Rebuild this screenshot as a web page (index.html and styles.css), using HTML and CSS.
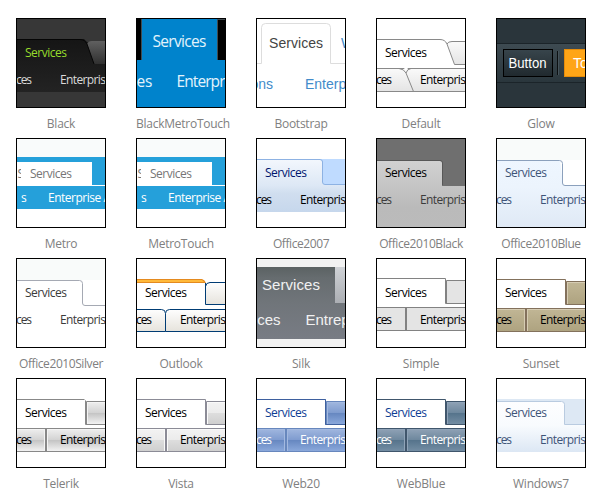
FILE: index.html
```
<!DOCTYPE html>
<html lang="en">
<head>
<meta charset="utf-8">
<title>Skins</title>
<link rel="stylesheet" href="styles.css">
</head>
<body>
<svg class="defs" width="0" height="0" aria-hidden="true">
  <defs>
    <linearGradient id="g-black" x2="0" y2="1"><stop offset="0" stop-color="#151515"/><stop offset="1" stop-color="#232323"/></linearGradient>
    <linearGradient id="g-black-tab" x2="0" y2="1"><stop offset="0" stop-color="#606060"/><stop offset="1" stop-color="#303030"/></linearGradient>
    <linearGradient id="g-default" x2="0" y2="1"><stop offset="0" stop-color="#fafafa"/><stop offset="1" stop-color="#e4e4e4"/></linearGradient>
    <linearGradient id="g-glow" x2="0" y2="1"><stop offset="0" stop-color="#3e4b52"/><stop offset="1" stop-color="#2a363c"/></linearGradient>
    <linearGradient id="g-glow-button" x2="0" y2="1"><stop offset="0" stop-color="#38454c"/><stop offset="1" stop-color="#20292e"/></linearGradient>
    <linearGradient id="g-o07" x2="0" y2="1"><stop offset="0" stop-color="#f3f7fd"/><stop offset=".5" stop-color="#dde8f5"/><stop offset=".65" stop-color="#d0deef"/><stop offset="1" stop-color="#c6d7ec"/></linearGradient>
    <linearGradient id="g-o10k" x2="0" y2="1"><stop offset="0" stop-color="#d2d2d2"/><stop offset=".7" stop-color="#bababa"/><stop offset="1" stop-color="#bbbbbb"/></linearGradient>
    <linearGradient id="g-o10b" x2="0" y2="1"><stop offset="0" stop-color="#eef6ff"/><stop offset=".4" stop-color="#ecf4fd"/><stop offset="1" stop-color="#dfe9f5"/></linearGradient>
    <linearGradient id="g-outlook" x2="0" y2="1"><stop offset="0" stop-color="#fefefe"/><stop offset="1" stop-color="#e6e3dc"/></linearGradient>
    <linearGradient id="g-silk" x2="0" y2="1"><stop offset="0" stop-color="#5b6263"/><stop offset=".15" stop-color="#666c6f"/><stop offset=".5" stop-color="#70757a"/><stop offset="1" stop-color="#787c84"/></linearGradient>
    <linearGradient id="g-silk-tab" x2="0" y2="1"><stop offset="0" stop-color="#cfd2d6"/><stop offset="1" stop-color="#abaeb3"/></linearGradient>
    <linearGradient id="g-sunset" x2="0" y2="1"><stop offset="0" stop-color="#c0b594"/><stop offset="1" stop-color="#aea380"/></linearGradient>
    <linearGradient id="g-telerik" x2="0" y2="1"><stop offset="0" stop-color="#ececec"/><stop offset=".48" stop-color="#d2d2d2"/><stop offset=".5" stop-color="#c5c5c5"/><stop offset="1" stop-color="#f2f2f2"/></linearGradient>
    <linearGradient id="g-vista" x2="0" y2="1"><stop offset="0" stop-color="#f2f2f2"/><stop offset=".48" stop-color="#ebebeb"/><stop offset=".5" stop-color="#dddddd"/><stop offset="1" stop-color="#cfcfcf"/></linearGradient>
    <linearGradient id="g-web20" x2="0" y2="1"><stop offset="0" stop-color="#9db4dd"/><stop offset=".48" stop-color="#7e9bcf"/><stop offset=".5" stop-color="#6788c1"/><stop offset="1" stop-color="#8aa8db"/></linearGradient>
    <linearGradient id="g-webblue" x2="0" y2="1"><stop offset="0" stop-color="#8c9fb3"/><stop offset=".48" stop-color="#6d879d"/><stop offset=".5" stop-color="#56748c"/><stop offset="1" stop-color="#738da3"/></linearGradient>
    <linearGradient id="g-win7" x2="0" y2="1"><stop offset="0" stop-color="#fefeff"/><stop offset=".5" stop-color="#f8fbfe"/><stop offset="1" stop-color="#dce7f4"/></linearGradient>

    <symbol id="square-tabs" viewBox="0 0 90 90">
      <rect class="sheen" x="70" y="23" width="20" height="24"/>
      <rect class="body" x="72" y="25" width="18" height="21"/>
      <path class="edge" d="M0 21.5H69.5V46.5H90M70.5 47V23.5H90"/>
      <rect class="sheen" x="0" y="51" width="90" height="22"/>
      <rect class="body" x="0" y="52" width="28" height="21"/>
      <rect class="body" x="32" y="52" width="58" height="21"/>
      <path class="edge" d="M0 50.5H90M0 73.5H90M29.5 50V74M30.5 50V74"/>
    </symbol>
    <symbol id="metro-tabs" viewBox="0 0 90 90">
      <rect fill="#f9fbfb" width="90" height="19"/>
      <rect fill="#25a0da" y="19" width="90" height="52"/>
      <path fill="#fff" d="M0 24H76V47H90V48H0Z"/>
    </symbol>
  </defs>
</svg>

<main class="gallery">
  <figure class="skin">
    <svg class="thumb" viewBox="0 0 90 90">
      <rect fill="#373737" width="90" height="90"/>
      <rect fill="url(#g-black)" y="21" width="90" height="53"/>
      <path fill="#373737" d="M67 20H90V24H71Z"/>
      <path fill="url(#g-black-tab)" d="M71 26Q72 23 76 23H90V46H78Z"/>
      <path fill="none" stroke="#050505" d="M0 21.5H64Q69 21.5 71 26L78 46"/>
      <text class="t lime" x="9" y="39" textLength="42">Services</text>
      <text class="t pale" x="0" y="66" textLength="16">ces</text>
      <text class="t pale" x="44" y="66" textLength="46">Enterpris</text>
      <rect class="frame" x=".5" y=".5" width="89" height="89"/>
    </svg>
    <figcaption>Black</figcaption>
  </figure>
  <figure class="skin">
    <svg class="thumb" viewBox="0 0 90 90">
      <rect fill="#0083cc" width="90" height="90"/>
      <path fill="#000" d="M0 0H5V42H0ZM82 0H90V42H82Z"/>
      <path fill="none" stroke="#414b50" d="M5.5 1V42M81.5 42V1.5H89"/>
      <text class="t big pale-blue" x="16.5" y="29" textLength="54">Services</text>
      <text class="t big pale-blue" x="16.5" y="69" text-anchor="end">ces</text>
      <text class="t big pale-blue" x="40.5" y="69" textLength="49">Enterpr</text>
      <rect class="frame" x=".5" y=".5" width="89" height="89"/>
    </svg>
    <figcaption class="wide">BlackMetroTouch</figcaption>
  </figure>
  <figure class="skin">
    <svg class="thumb" viewBox="0 0 90 90">
      <rect fill="#fff" width="90" height="90"/>
      <path fill="none" stroke="#ddd" d="M0 45.5H5.5V9.5Q5.5 5.5 9.5 5.5H70.5Q74.5 5.5 74.5 9.5V45.5H90"/>
      <text class="a a14 ink" x="13" y="30" textLength="54">Services</text>
      <text class="a a14 link" x="85" y="30">W</text>
      <text class="a a14 link" x="17" y="71" text-anchor="end">ons</text>
      <text class="a a14 link" x="49" y="71">Enterp</text>
      <rect class="frame" x=".5" y=".5" width="89" height="89"/>
    </svg>
    <figcaption>Bootstrap</figcaption>
  </figure>
  <figure class="skin">
    <svg class="thumb" viewBox="0 0 90 90">
      <rect fill="#fff" width="90" height="90"/>
      <g stroke="#898989">
        <path fill="url(#g-default)" d="M71 26Q72 23.500 76 23.500H92V46.500H78.500Z"/>
        <path fill="none" d="M0 21.500H64Q69 21.500 71 26"/>
        <rect fill="url(#g-default)" x="-2" y="50.500" width="94" height="23"/>
        <path fill="none" d="M23 50.500Q28 51 30 55L37.500 73.500M30 55Q31 51 35 50.500"/>
      </g>
      <path fill="#fff" d="M28 50L30 53L32 50Z"/>
      <text class="t" x="9" y="39" textLength="42">Services</text>
      <text class="t" x="0" y="66" textLength="16">ces</text>
      <text class="t" x="44" y="66" textLength="46">Enterpris</text>
      <rect class="frame" x=".5" y=".5" width="89" height="89"/>
    </svg>
    <figcaption>Default</figcaption>
  </figure>
  <figure class="skin">
    <svg class="thumb" viewBox="0 0 90 90">
      <rect fill="#2a353b" width="90" height="90"/>
      <rect fill="url(#g-glow)" x="-2" y="25.500" width="94" height="39" stroke="#1b2429"/>
      <rect fill="url(#g-glow-button)" x="7.500" y="31.500" width="49" height="27" stroke="#000"/>
      <path stroke="#0b0f11" d="M61.500 33V57"/>
      <path stroke="#46535a" d="M62.500 33V57"/>
      <rect fill="#ffa517" x="68.500" y="31.500" width="24" height="27" stroke="#e68c0a"/>
      <text class="a a14 white" x="12.500" y="50" textLength="38" lengthAdjust="spacingAndGlyphs">Button</text>
      <text class="a a14 white" x="77" y="50">To</text>
      <rect class="frame" x=".5" y=".5" width="89" height="89"/>
    </svg>
    <figcaption>Glow</figcaption>
  </figure>

  <figure class="skin">
    <svg class="thumb" viewBox="0 0 90 90">
      <rect fill="#fff" width="90" height="90"/>
      <use href="#metro-tabs" width="90" height="90"/>
      <svg width="5" height="90"><text class="t gray" x="1.500" y="40">S</text></svg>
      <text class="t gray" x="14" y="40" textLength="42">Services</text>
      <text class="t white" x="5" y="64">s</text>
      <text class="t white" x="32" y="64" textLength="63">Enterprise A</text>
      <rect class="frame" x=".5" y=".5" width="89" height="89"/>
    </svg>
    <figcaption>Metro</figcaption>
  </figure>
  <figure class="skin">
    <svg class="thumb" viewBox="0 0 90 90">
      <rect fill="#fff" width="90" height="90"/>
      <use href="#metro-tabs" width="90" height="90"/>
      <svg width="5" height="90"><text class="t gray" x="1.500" y="40">S</text></svg>
      <text class="t gray" x="14" y="40" textLength="42">Services</text>
      <text class="t white" x="5" y="64">s</text>
      <text class="t white" x="32" y="64" textLength="63">Enterprise A</text>
      <rect class="frame" x=".5" y=".5" width="89" height="89"/>
    </svg>
    <figcaption>MetroTouch</figcaption>
  </figure>
  <figure class="skin office">
    <svg class="thumb" viewBox="0 0 90 90">
      <rect fill="#fff" width="90" height="90"/>
      <rect fill="url(#g-o07)" y="21" width="90" height="53"/>
      <path fill="#bfdbff" stroke="#8db2e3" d="M66.500 20.500V44Q66.500 46.500 69 46.500H92V20.500Z"/>
      <path fill="#bfdbff" d="M64 21H90V24H67Z"/>
      <path fill="#fff" d="M60 20H90V21H60Z"/>
      <path fill="none" stroke="#8db2e3" d="M0 21.500H64Q66.500 21.500 66.500 24V44"/>
      <text class="t navy" x="9" y="39" textLength="42">Services</text>
      <text class="t" x="0" y="66" textLength="16">ces</text>
      <text class="t" x="44" y="66" textLength="46">Enterpris</text>
      <rect class="frame" x=".5" y=".5" width="89" height="89"/>
    </svg>
    <figcaption>Office2007</figcaption>
  </figure>
  <figure class="skin office">
    <svg class="thumb" viewBox="0 0 90 90">
      <rect fill="url(#g-o10k)" y="22" width="90" height="68"/>
      <path fill="#6f6f6f" d="M0 0H90V48H66V24Q66 23 64 23H0Z"/>
      <path fill="none" stroke="#575757" d="M0 22.500H64Q66.500 22.500 66.500 25V47"/>
      <text class="t" x="9" y="39" textLength="42">Services</text>
      <text class="t dark" x="0" y="66" textLength="16">ces</text>
      <text class="t dark" x="44" y="66" textLength="46">Enterpris</text>
      <rect class="frame" x=".5" y=".5" width="89" height="89"/>
    </svg>
    <figcaption>Office2010Black</figcaption>
  </figure>
  <figure class="skin office">
    <svg class="thumb" viewBox="0 0 90 90">
      <rect fill="#f9fbfa" width="90" height="90"/>
      <rect fill="url(#g-o10b)" y="22" width="90" height="68"/>
      <path fill="#fff" d="M64 22H90V47H67Z"/>
      <path fill="none" stroke="#8ba0bc" d="M0 22.500H63.500Q66.500 22.500 66.500 25.500V45Q66.500 47.500 69 47.500H90"/>
      <text class="t slate" x="9" y="39" textLength="42">Services</text>
      <text class="t slate" x="0" y="66" textLength="16">ces</text>
      <text class="t slate" x="44" y="66" textLength="46">Enterpris</text>
      <rect class="frame" x=".5" y=".5" width="89" height="89"/>
    </svg>
    <figcaption>Office2010Blue</figcaption>
  </figure>

  <figure class="skin office">
    <svg class="thumb" viewBox="0 0 90 90">
      <rect fill="#fff" width="90" height="90"/>
      <rect fill="#f9fbfa" width="90" height="22"/>
      <path fill="none" stroke="#a5a9b3" d="M0 22.500H63.500Q66.500 22.500 66.500 25.500V45Q66.500 47.500 69 47.500H90"/>
      <text class="t dark" x="9" y="39" textLength="42">Services</text>
      <text class="t dark" x="0" y="66" textLength="16">ces</text>
      <text class="t dark" x="44" y="66" textLength="46">Enterpris</text>
      <rect class="frame" x=".5" y=".5" width="89" height="89"/>
    </svg>
    <figcaption>Office2010Silver</figcaption>
  </figure>
  <figure class="skin">
    <svg class="thumb" viewBox="0 0 90 90">
      <rect fill="#fff" width="90" height="90"/>
      <g stroke="#003c74">
        <path fill="url(#g-outlook)" d="M69.500 46.500V28.500Q70 24.500 74 24.500H92V46.500Z"/>
        <path fill="url(#g-outlook)" d="M-2 51.500H25.500Q29.500 51.500 29.500 55.500V73.500H-2Z"/>
        <path fill="url(#g-outlook)" d="M29.500 73.500V55.500Q29.500 51.500 33.500 51.500H92V73.500Z"/>
        <path d="M69.500 25V30"/>
      </g>
      <path fill="#e48a1f" d="M0 21H66Q69 22 70 25H0Z"/>
      <path fill="#ffb93a" d="M0 22H66L68 24H0Z"/>
      <text class="t" x="9" y="39" textLength="42">Services</text>
      <text class="t" x="0" y="66" textLength="16">ces</text>
      <text class="t" x="44" y="66" textLength="46">Enterpris</text>
      <rect class="frame" x=".5" y=".5" width="89" height="89"/>
    </svg>
    <figcaption>Outlook</figcaption>
  </figure>
  <figure class="skin">
    <svg class="thumb" viewBox="0 0 90 90">
      <rect fill="#f2f2f2" width="90" height="90"/>
      <rect fill="url(#g-silk)" y="9" width="90" height="72"/>
      <rect fill="url(#g-silk-tab)" x="79" y="9" width="11" height="36"/>
      <text class="a a15 silk" x="6" y="32" textLength="58">Services</text>
      <text class="a a15 silk" x="24.500" y="67" text-anchor="end">ces</text>
      <text class="a a15 silk" x="49.500" y="67">Entrep</text>
      <rect class="frame" x=".5" y=".5" width="89" height="89"/>
    </svg>
    <figcaption>Silk</figcaption>
  </figure>
  <figure class="skin simple">
    <svg class="thumb" viewBox="0 0 90 90">
      <rect fill="#fff" width="90" height="90"/>
      <use href="#square-tabs" y="-1" width="90" height="90"/>
      <text class="t" x="9" y="39" textLength="42">Services</text>
      <text class="t" x="0" y="66" textLength="16">ces</text>
      <text class="t" x="44" y="66" textLength="46">Enterpris</text>
      <rect class="frame" x=".5" y=".5" width="89" height="89"/>
    </svg>
    <figcaption>Simple</figcaption>
  </figure>
  <figure class="skin sunset">
    <svg class="thumb" viewBox="0 0 90 90">
      <rect fill="#fff" width="90" height="90"/>
      <use href="#square-tabs" width="90" height="90"/>
      <text class="t" x="9" y="39" textLength="42">Services</text>
      <text class="t" x="0" y="66" textLength="16">ces</text>
      <text class="t" x="44" y="66" textLength="46">Enterpris</text>
      <rect class="frame" x=".5" y=".5" width="89" height="89"/>
    </svg>
    <figcaption>Sunset</figcaption>
  </figure>

  <figure class="skin telerik">
    <svg class="thumb" viewBox="0 0 90 90">
      <rect fill="#fff" width="90" height="90"/>
      <use href="#square-tabs" width="90" height="90"/>
      <path fill="#fff" d="M68 21H71V22.500H69.500Z"/>
      <text class="t" x="9" y="39" textLength="42">Services</text>
      <text class="t" x="0" y="66" textLength="16">ces</text>
      <text class="t" x="44" y="66" textLength="46">Enterpris</text>
      <rect class="frame" x=".5" y=".5" width="89" height="89"/>
    </svg>
    <figcaption>Telerik</figcaption>
  </figure>
  <figure class="skin vista">
    <svg class="thumb" viewBox="0 0 90 90">
      <rect fill="#fff" width="90" height="90"/>
      <use href="#square-tabs" width="90" height="90"/>
      <text class="t" x="9" y="39" textLength="42">Services</text>
      <text class="t" x="0" y="66" textLength="16">ces</text>
      <text class="t" x="44" y="66" textLength="46">Enterpris</text>
      <rect class="frame" x=".5" y=".5" width="89" height="89"/>
    </svg>
    <figcaption>Vista</figcaption>
  </figure>
  <figure class="skin web20">
    <svg class="thumb" viewBox="0 0 90 90">
      <rect fill="#fff" width="90" height="90"/>
      <use href="#square-tabs" width="90" height="90"/>
      <path fill="none" stroke="#3e609f" d="M0 21.500H69.500V46.500H90"/>
      <text class="t blue" x="9" y="39" textLength="42">Services</text>
      <text class="t white" x="0" y="66" textLength="16">ces</text>
      <text class="t white" x="44" y="66" textLength="46">Enterpris</text>
      <rect class="frame" x=".5" y=".5" width="89" height="89"/>
    </svg>
    <figcaption>Web20</figcaption>
  </figure>
  <figure class="skin webblue">
    <svg class="thumb" viewBox="0 0 90 90">
      <rect fill="#fff" width="90" height="90"/>
      <use href="#square-tabs" width="90" height="90"/>
      <text class="t blue" x="9" y="39" textLength="42">Services</text>
      <text class="t white" x="0" y="66" textLength="16">ces</text>
      <text class="t white" x="44" y="66" textLength="46">Enterpris</text>
      <rect class="frame" x=".5" y=".5" width="89" height="89"/>
    </svg>
    <figcaption>WebBlue</figcaption>
  </figure>
  <figure class="skin">
    <svg class="thumb" viewBox="0 0 90 90">
      <rect fill="#fff" width="90" height="90"/>
      <rect fill="url(#g-win7)" y="21" width="90" height="53"/>
      <path fill="#dde8f4" d="M0 21H90V46H68V25L66 23H0Z"/>
      <path fill="none" stroke="#b9cbe0" d="M0 23.500H65.500Q68.500 23.500 68.500 26.500V46.500H90"/>
      <text class="t slate" x="9" y="39" textLength="42">Services</text>
      <text class="t slate" x="0" y="66" textLength="16">ces</text>
      <text class="t slate" x="44" y="66" textLength="46">Enterpris</text>
      <rect class="frame" x=".5" y=".5" width="89" height="89"/>
    </svg>
    <figcaption>Windows7</figcaption>
  </figure>
</main>
</body>
</html>
```
FILE: styles.css
```
body {
  margin: 0;
  background: #fff;
  font: 12px/16px "Open Sans", "Noto Sans", sans-serif;
}
.defs { display: block; height: 0; }
.gallery {
  display: grid;
  grid-template-columns: repeat(5, 120px);
  grid-auto-rows: 120px;
  padding-top: 18px;
  padding-left: 1px;
  width: 600px;
}
.skin {
  display: flex;
  flex-direction: column;
  align-items: center;
  margin: 0;
  gap: 8px;
}
.thumb { display: block; width: 90px; height: 90px; overflow: hidden; }
figcaption { color: #808080; white-space: nowrap; letter-spacing: -.25px; }
figcaption.wide { padding-left: 4px; }
.office figcaption { letter-spacing: -.42px; }
.frame { fill: none; stroke: #000; }

.t { font-family: "Open Sans", "Noto Sans", sans-serif; font-size: 12px; fill: #000; }
.t.big { font-size: 15.500px; }
.a { font-family: "Liberation Sans", Arial, sans-serif; }
.a14 { font-size: 14px; }
.a15 { font-size: 15px; }
.t.lime { fill: #97dc2c; }
.t.pale { fill: #dadada; }
.t.pale-blue { fill: #e3f3fc; }
.t.gray { fill: #767676; }
.t.navy { fill: #00156e; }
.t.dark { fill: #3b3b3b; }
.t.slate { fill: #3e5478; }
.t.blue { fill: #0e3d93; }
.t.white, .a.white { fill: #fff; }
.a.ink { fill: #444; }
.a.link { fill: #428bca; }
.a.silk { fill: #f1f1f1; }

/* Square tab strips share one shape; each skin supplies its colours. */
.edge { fill: none; stroke: var(--edge); }
.sheen { fill: var(--sheen); }
.body { fill: var(--body); }
.simple { --edge: #828282; --sheen: #e4e4e4; --body: #e4e4e4; }
.sunset { --edge: #83715c; --sheen: #d6ccb3; --body: url(#g-sunset); }
.telerik { --edge: #888; --sheen: #f4f4f4; --body: url(#g-telerik); }
.vista { --edge: #8b8b96; --sheen: #fafafa; --body: url(#g-vista); }
.web20 { --edge: #6787bd; --sheen: #a3b9e0; --body: url(#g-web20); }
.webblue { --edge: #40566c; --sheen: #8fa3b8; --body: url(#g-webblue); }
```
